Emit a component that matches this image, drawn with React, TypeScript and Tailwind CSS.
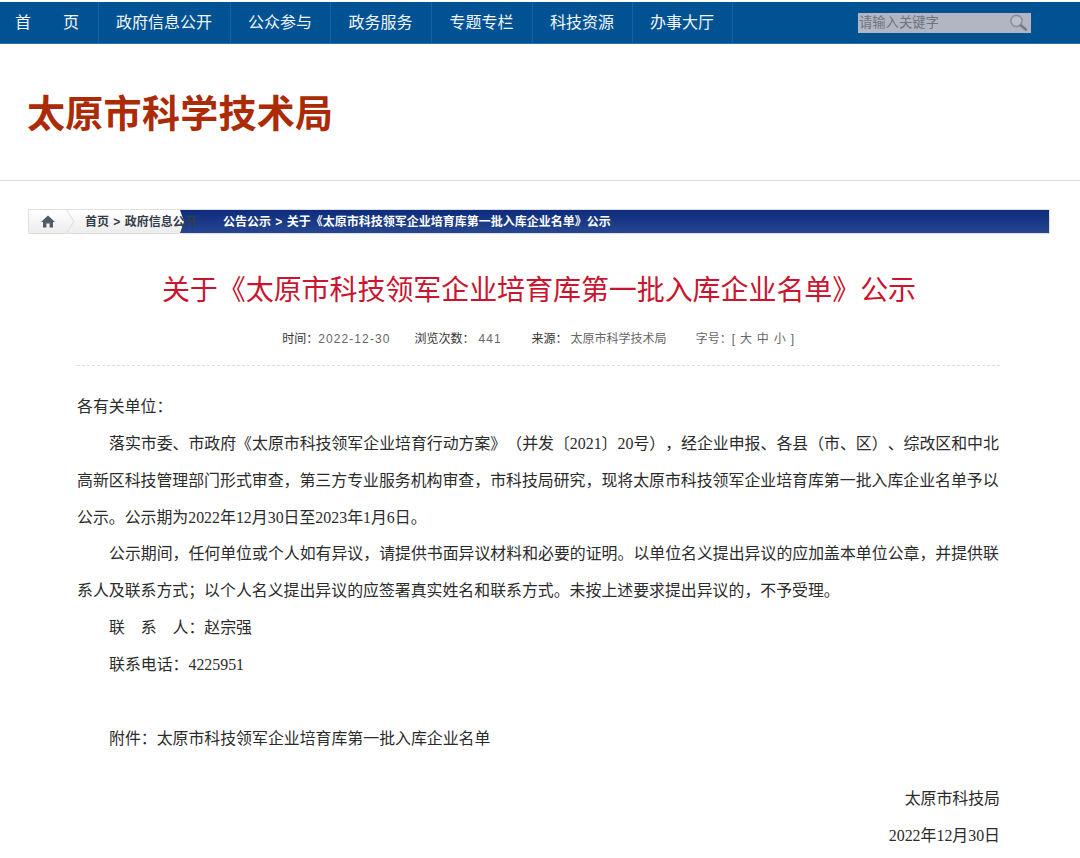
import React from 'react'

const sans = 'font-["Liberation_Sans","Noto_Sans_CJK_SC",sans-serif]'

const navItems = [
  { label: '首页', width: 'w-[99px]', text: 'tracking-[32px] pl-[15px] text-left' },
  { label: '政府信息公开', width: 'w-[132px]', text: 'pr-[1px] text-center' },
  { label: '公众参与', width: 'w-[100px]', text: 'pr-[1px] text-center' },
  { label: '政务服务', width: 'w-[101px]', text: 'pr-[1px] text-center' },
  { label: '专题专栏', width: 'w-[101px]', text: 'pr-[1px] text-center' },
  { label: '科技资源', width: 'w-[100px]', text: 'pr-[1px] text-center' },
  { label: '办事大厅', width: 'w-[100px]', text: 'pr-[1px] text-center' },
]

function TopNav() {
  return (
    <div className="mt-[2px] flex h-[42px] items-stretch justify-between border-b border-[#2a6fa8] bg-[#015293] pr-[49px]">
      <div className="flex">
        {navItems.map((item) => (
          <a
            key={item.label}
            className={`${item.width} ${item.text} whitespace-nowrap border-r border-[#0b65a8] text-[16px] leading-[41px] text-[#f2f6fa]`}
          >
            {item.label}
          </a>
        ))}
      </div>
      <div className="mt-[11px] flex h-[20px] w-[173px] items-center justify-between bg-[#b1b6c2] pl-[1px] pr-[3px]">
        <span className="text-[13.3px] text-[#6e747f]">请输入关键字</span>
        <svg width="19" height="18" viewBox="0 0 19 18" fill="none">
          <circle cx="7.5" cy="7" r="5.6" stroke="#8a8f98" strokeWidth="1.6" fill="#bcc0ca" />
          <path d="M11.8 11.2 L16.8 15.6" stroke="#777c86" strokeWidth="2.6" strokeLinecap="round" />
        </svg>
      </div>
    </div>
  )
}

function Breadcrumb() {
  return (
    <div className="ml-[28px] mr-[30px] mt-[28px] flex h-[25px] border border-[#e0e0e4] text-[12px] font-bold leading-[24px] [word-spacing:1px]">
      <div className="relative z-10 flex w-[151px] shrink-0 items-center bg-gradient-to-b from-white to-[#ececec]">
        <svg className="ml-[12px] shrink-0" width="14" height="13" viewBox="0 0 14 13">
          <path d="M7 0.5 L14 7 H12 V12.5 H8.6 V8.5 H5.4 V12.5 H2 V7 H0 Z" fill="#4f5a66" />
        </svg>
        <svg className="ml-[11px] h-[23px] w-[9px] shrink-0" viewBox="0 0 9 23" fill="none">
          <path d="M0.5 0 L8 11.5 L0.5 23" stroke="#dcdcdc" />
        </svg>
        <span className="ml-[10px] whitespace-nowrap text-[#333d4a]">首页 &gt; 政府信息公开</span>
      </div>
      <div className="flex-1 bg-gradient-to-b from-[#0c2c7c] to-[#27468f] pl-[43px] text-white [clip-path:polygon(0_0,100%_0,100%_100%,0_100%,4px_50%)]">
        公告公示 &gt; 关于《太原市科技领军企业培育库第一批入库企业名单》公示
      </div>
    </div>
  )
}

function MetaRow() {
  return (
    <div className="mt-[14px] flex h-[20px] items-center justify-center whitespace-nowrap pr-[3px] text-[12px] text-[#666]">
      <span className="text-[#333]">时间：</span>
      <span className="tracking-[1.1px]">2022-12-30</span>
      <span className="ml-[24px] text-[#333]">浏览次数：</span>
      <span className="ml-[4px] tracking-[1px]">441</span>
      <span className="ml-[30px] text-[#333]">来源：</span>
      <span className="ml-[3px]">太原市科学技术局</span>
      <span className="ml-[29px]">字号：</span>
      <span className="tracking-[0.8px]">[ 大 中 小 ]</span>
    </div>
  )
}

export default function App() {
  return (
    <div className={`h-[858px] overflow-hidden bg-white ${sans}`}>
      <TopNav />

      <header className="flex h-[137px] items-center border-b border-[#dcdcdc] pl-[27px] pt-[4px]">
        <h1 className="text-[38px] font-bold leading-none tracking-[0.3px] text-[#ab2b06]">太原市科学技术局</h1>
      </header>

      <Breadcrumb />

      <h2 className="mt-[33px] pr-[2px] text-center text-[28px] leading-[48px] tracking-[-0.07px] text-[#c9152f]">
        关于《太原市科技领军企业培育库第一批入库企业名单》公示
      </h2>

      <MetaRow />

      <article className='mx-[77px] mt-[16px] w-[923px] border-t border-dashed border-[#dedede] pt-[23px] font-["Liberation_Serif","Noto_Sans_CJK_SC",serif] text-[15.9px] leading-[36.86px] text-[#2b2b2b] [text-spacing-trim:space-all]'>
        <p>各有关单位：</p>
        <p className="indent-[32px]">
          落实市委、市政府《太原市科技领军企业培育行动方案》（并发〔2021〕20号），经企业申报、各县（市、区）、综改区和中北高新区科技管理部门形式审查，第三方专业服务机构审查，市科技局研究，现将太原市科技领军企业培育库第一批入库企业名单予以公示。公示期为2022年12月30日至2023年1月6日。
        </p>
        <p className="indent-[32px]">
          公示期间，任何单位或个人如有异议，请提供书面异议材料和必要的证明。以单位名义提出异议的应加盖本单位公章，并提供联系人及联系方式；以个人名义提出异议的应签署真实姓名和联系方式。未按上述要求提出异议的，不予受理。
        </p>
        <p className="indent-[32px]">联　系　人：赵宗强</p>
        <p className="indent-[32px]">联系电话：4225951</p>
        <p className="mt-[37px] indent-[32px]">附件：太原市科技领军企业培育库第一批入库企业名单</p>
        <p className="mt-[23px] text-right">太原市科技局</p>
        <p className="text-right">2022年12月30日</p>
      </article>
    </div>
  )
}
